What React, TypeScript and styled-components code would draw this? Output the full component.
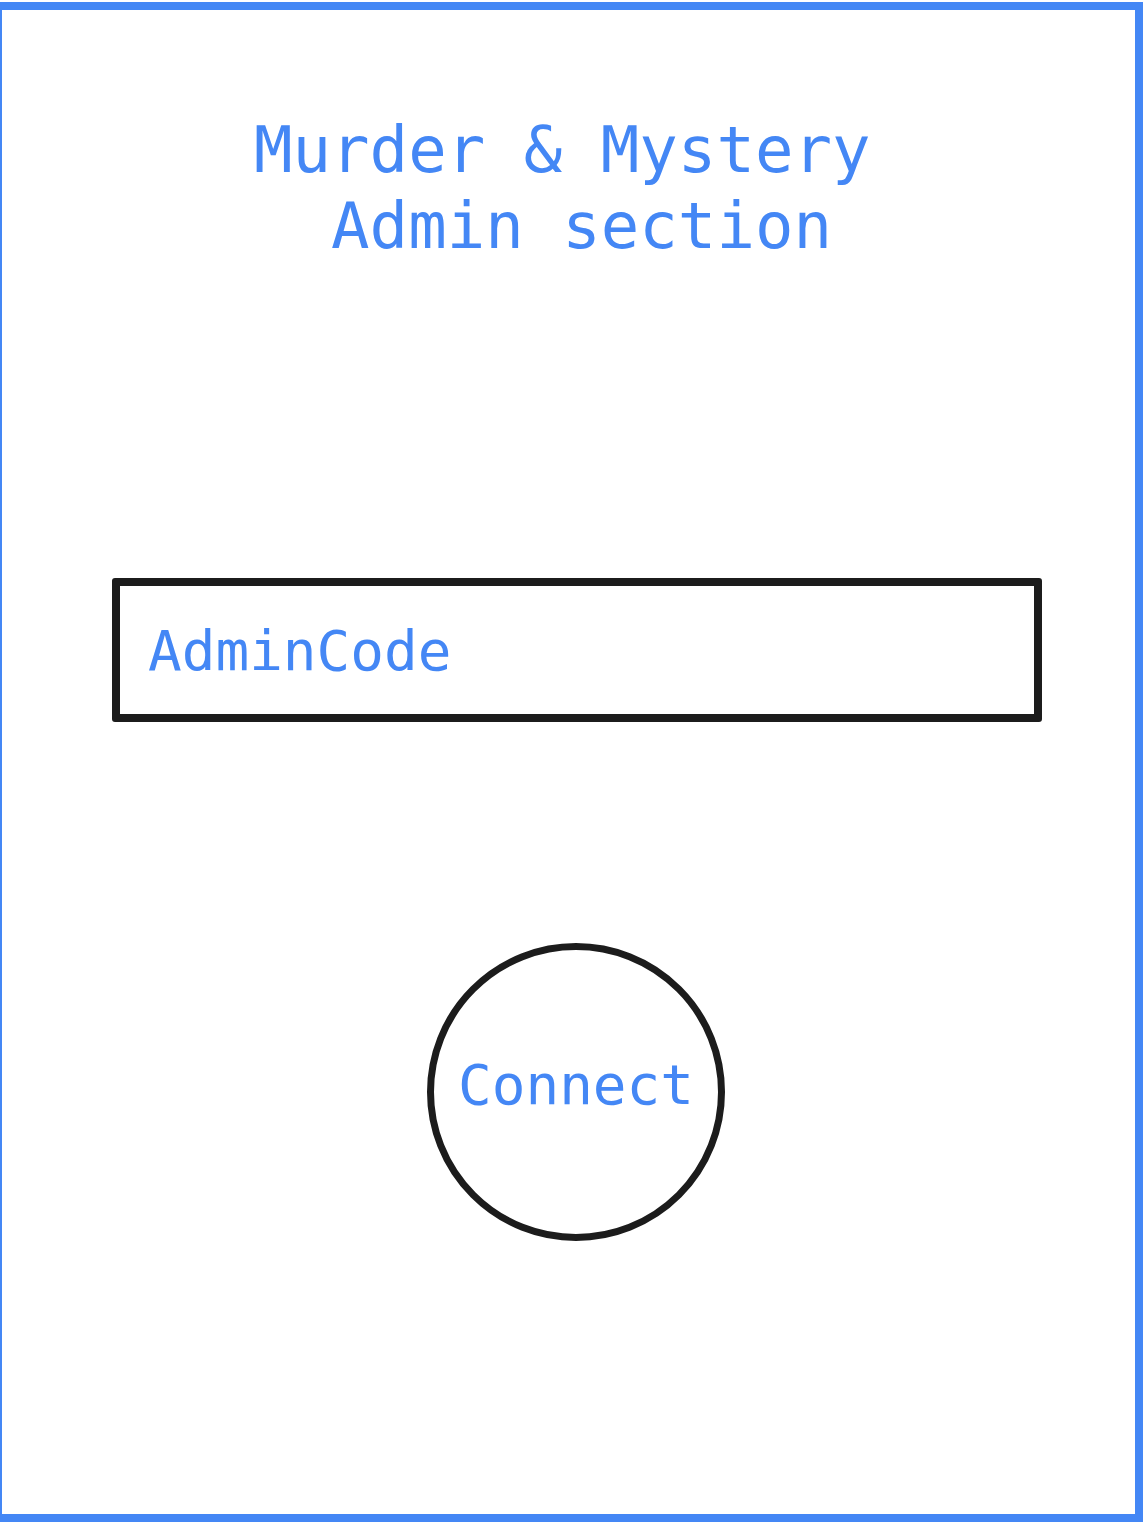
import React from "react";
import styled, { createGlobalStyle } from "styled-components";

const Global = createGlobalStyle`
  html, body { margin: 0; padding: 0; background: #ffffff; overflow: hidden; }
  * { box-sizing: border-box; }
`;

const BLUE = "#4487f5";
const INK = "#1c1c1c";
const MONO = `"DejaVu Sans Mono", "Liberation Mono", monospace`;

const Frame = styled.main`
  margin: 2px 0 0 -6px;
  width: 1149px;
  height: 1520px;
  border: 8px solid ${BLUE};
  display: flex;
  flex-direction: column;
  align-items: flex-start;
  font-family: ${MONO};
`;

const Title = styled.h1`
  margin: 102px 0 0 252px;
  font-family: ${MONO};
  font-weight: 400;
  font-size: 64px;
  line-height: 76px;
  color: ${BLUE};
  white-space: pre;
  letter-spacing: 0;
`;

const CodeField = styled.div`
  margin: 314px 0 0 110px;
  width: 930px;
  height: 144px;
  border: 8px solid ${INK};
  border-radius: 3px;
  display: flex;
  align-items: center;
  padding-left: 28px;
`;

const CodeInput = styled.input`
  border: none;
  outline: none;
  background: transparent;
  width: 100%;
  font-family: ${MONO};
  font-size: 56px;
  color: ${BLUE};
  padding: 0;
  &::placeholder { color: ${BLUE}; opacity: 1; }
`;

const ConnectButton = styled.button`
  margin: 221px 0 0 425px;
  width: 298px;
  height: 298px;
  border-radius: 50%;
  border: 7px solid ${INK};
  background: #ffffff;
  display: flex;
  align-items: center;
  justify-content: center;
  padding: 0 0 16px 0;
  font-family: ${MONO};
  font-size: 56px;
  color: ${BLUE};
  cursor: pointer;
`;

export default function App() {
  return (
    <>
      <Global />
      <Frame>
        <Title>{"Murder & Mystery\n  Admin section"}</Title>
        <CodeField>
          <CodeInput placeholder="AdminCode" />
        </CodeField>
        <ConnectButton>Connect</ConnectButton>
      </Frame>
    </>
  );
}
